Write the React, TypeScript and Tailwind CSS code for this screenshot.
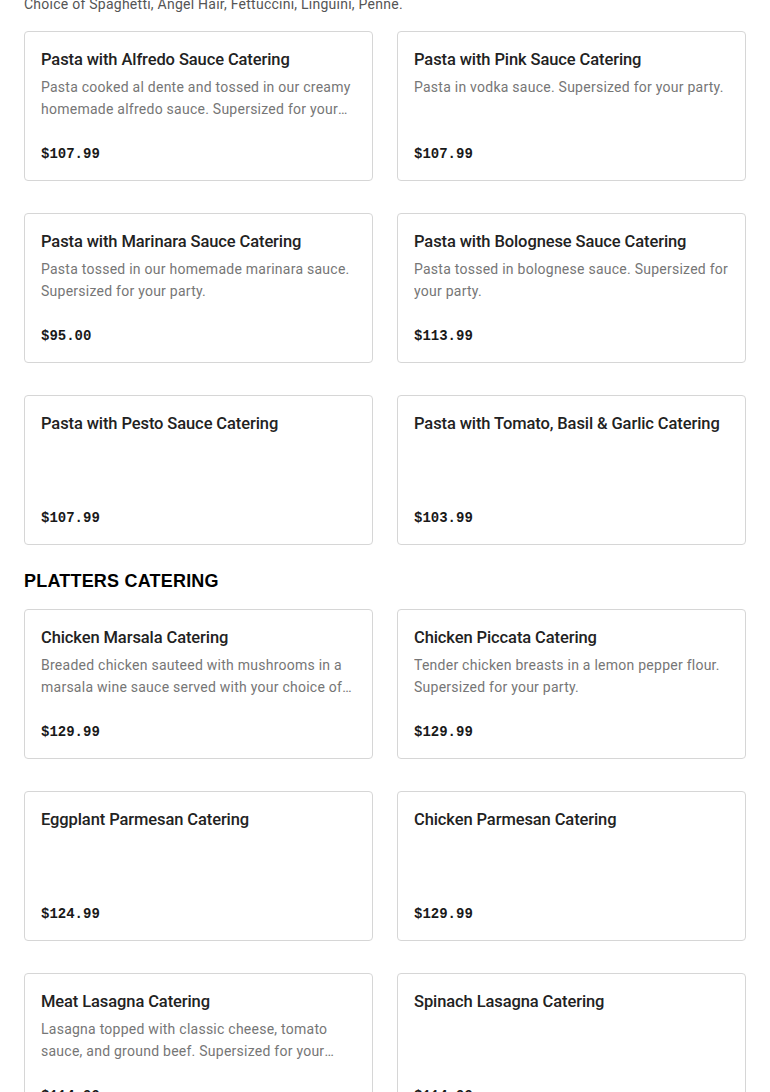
import React from 'react';

interface Item {
    name: string;
    description?: string;
    price: string;
}

const pastaItems: Item[] = [
    { name: 'Pasta with Alfredo Sauce Catering', description: 'Pasta cooked al dente and tossed in our creamy homemade alfredo sauce. Supersized for your party.', price: '$107.99' },
    { name: 'Pasta with Pink Sauce Catering', description: 'Pasta in vodka sauce. Supersized for your party.', price: '$107.99' },
    { name: 'Pasta with Marinara Sauce Catering', description: 'Pasta tossed in our homemade marinara sauce. Supersized for your party.', price: '$95.00' },
    { name: 'Pasta with Bolognese Sauce Catering', description: 'Pasta tossed in bolognese sauce. Supersized for your party.', price: '$113.99' },
    { name: 'Pasta with Pesto Sauce Catering', price: '$107.99' },
    { name: 'Pasta with Tomato, Basil & Garlic Catering', price: '$103.99' },
];

const platterItems: Item[] = [
    { name: 'Chicken Marsala Catering', description: 'Breaded chicken sauteed with mushrooms in a marsala wine sauce served with your choice of pasta. Supersized for your party.', price: '$129.99' },
    { name: 'Chicken Piccata Catering', description: 'Tender chicken breasts in a lemon pepper flour. Supersized for your party.', price: '$129.99' },
    { name: 'Eggplant Parmesan Catering', price: '$124.99' },
    { name: 'Chicken Parmesan Catering', price: '$129.99' },
    { name: 'Meat Lasagna Catering', description: 'Lasagna topped with classic cheese, tomato sauce, and ground beef. Supersized for your party.', price: '$114.99' },
    { name: 'Spinach Lasagna Catering', price: '$114.99' },
];

const MenuCard: React.FC<{ item: Item }> = ({ item }) => (
    <div className="flex flex-col h-[150px] border border-[#d6d6d6] rounded-[4px] bg-white px-4 pt-4 pb-4">
        <h3 className="text-[16.5px] leading-6 tracking-[-0.1px] font-medium text-[#222222]">{item.name}</h3>
        {item.description && (
            <p className="mt-1 text-[14px] leading-[22px] tracking-[0.25px] text-[#767676] line-clamp-2">{item.description}</p>
        )}
        <p className="mt-auto text-[14px] leading-5 font-bold text-[#191919] font-['Liberation_Mono',monospace]">
            {item.price}
        </p>
    </div>
);

export default function App() {
    return (
        <div className="min-h-screen bg-white px-6 overflow-hidden font-['Roboto',sans-serif]">
            <p className="-mt-[7px] text-[14px] leading-[22px] tracking-[0.25px] text-[#555555]">
                Choice of Spaghetti, Angel Hair, Fettuccini, Linguini, Penne.
            </p>
            <div className="mt-4 grid grid-cols-2 gap-x-6 gap-y-8">
                {pastaItems.map((item) => (
                    <MenuCard key={item.name} item={item} />
                ))}
            </div>
            <h2 className="mt-6 mb-4 text-[18px] leading-6 font-black tracking-[0.2px] text-black font-['Liberation_Sans',sans-serif]">
                PLATTERS CATERING
            </h2>
            <div className="grid grid-cols-2 gap-x-6 gap-y-8">
                {platterItems.map((item) => (
                    <MenuCard key={item.name} item={item} />
                ))}
            </div>
        </div>
    );
}
